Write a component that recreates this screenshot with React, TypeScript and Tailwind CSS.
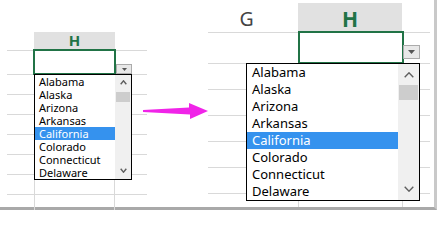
import React from "react";

const states = [
  "Alabama",
  "Alaska",
  "Arizona",
  "Arkansas",
  "California",
  "Colorado",
  "Connecticut",
  "Delaware",
];

function Chev({ up, w, h }: { up: boolean; w: number; h: number }) {
  const d = up
    ? `M0.7 ${h - 0.8} L${w / 2} 0.8 L${w - 0.7} ${h - 0.8}`
    : `M0.7 0.8 L${w / 2} ${h - 0.8} L${w - 0.7} 0.8`;
  return (
    <svg width={w} height={h} viewBox={`0 0 ${w} ${h}`}>
      <path d={d} stroke="#5f5f5f" strokeWidth={1.4} fill="none" />
    </svg>
  );
}

function Tri({ w, h }: { w: number; h: number }) {
  return (
    <svg width={w} height={h} viewBox={`0 0 ${w} ${h}`}>
      <path d={`M0 0 L${w} 0 L${w / 2} ${h} Z`} fill="#555555" />
    </svg>
  );
}

function LeftRow({ last }: { last?: boolean }) {
  return (
    <div
      className={
        last
          ? "flex h-[16px] border-t border-[#d9d9d9]"
          : "flex h-[20px] border-t border-[#d9d9d9]"
      }
    >
      <div className="w-[27px]" />
      <div className="w-[80px] border-l border-[#d9d9d9]" />
      <div className="flex-1 border-l border-[#d9d9d9]" />
    </div>
  );
}

function RightRow({ last }: { last?: boolean }) {
  return (
    <div
      className={
        last
          ? "flex h-[14px] border-t border-[#d9d9d9]"
          : "flex h-[26px] border-t border-[#d9d9d9]"
      }
    >
      <div className="w-[90px]" />
      <div className="w-[104px] border-l border-[#d9d9d9]" />
      <div className="flex-1 border-l border-[#d9d9d9]" />
    </div>
  );
}

export default function App() {
  return (
    <div className="w-[437px] h-[210px] bg-white overflow-hidden font-['Noto_Sans',sans-serif]">
      <div className="relative flex w-[437px] h-[210px] bg-white border-r-[3px] border-b-[3px] border-r-[#c9c9c9] border-b-[#a9a9a9]">
        {/* LEFT small view */}
        <div className="relative ml-[7px] w-[140px] h-full pt-[32px]">
          <div className="flex h-[18px]">
            <div className="w-[27px]" />
            <div className="w-[81px] h-[17px] bg-[#e1e1e1] text-center text-[15px] font-bold leading-[17px] text-[#217346]">
              H
            </div>
          </div>
          <div className="flex h-[24px] border-t border-[#d9d9d9]">
            <div className="w-[27px]" />
            <div className="w-[80px] border-l border-[#d9d9d9]" />
            <div className="flex-1 border-l border-[#d9d9d9]" />
          </div>
          <LeftRow />
          <LeftRow />
          <LeftRow />
          <LeftRow />
          <LeftRow />
          <LeftRow />
          <LeftRow last />

          <div className="absolute left-[26px] top-[49px] w-[83px] h-[26px] border-2 border-[#217346]" />
          <div className="absolute left-[109px] top-[64px] w-[16px] h-[10px] border border-[#ababab] bg-[#e8e8e8] flex items-center justify-center">
            <Tri w={5} h={3} />
          </div>
          <div className="absolute left-[27px] top-[74px] w-[98px] h-[106px] border border-black bg-white flex">
            <div className="w-[80px] flex flex-col">
              {states.map((s, i) => (
                <div
                  key={s}
                  className={
                    i === 4
                      ? "h-[13px] pl-[4px] text-[11px] leading-[13px] bg-[#3592ee] text-white whitespace-nowrap"
                      : "h-[13px] pl-[4px] text-[11px] leading-[13px] text-black whitespace-nowrap"
                  }
                >
                  {s}
                </div>
              ))}
            </div>
            <div className="w-[16px] bg-[#f0f0f0] flex flex-col">
              <div className="h-[13px] flex items-center justify-center pt-[1px]">
                <Chev up w={7} h={5} />
              </div>
              <div className="mt-[4px] mx-[1px] h-[10px] bg-[#cdcdcd]" />
              <div className="flex-1" />
              <div className="h-[13px] flex items-center justify-center pb-[4px]">
                <Chev up={false} w={7} h={5} />
              </div>
            </div>
          </div>
        </div>

        {/* RIGHT zoomed view */}
        <div className="relative ml-[61px] w-[222px] h-full">
          <div className="flex h-[32px]">
            <div className="w-[77px] pt-[9px] text-center text-[19.5px] leading-[20px] text-[#444444]">
              G
            </div>
            <div className="w-[13px]" />
            <div className="w-[104px] h-[28px] mt-[3px] pt-[6px] bg-[#e1e1e1] text-center text-[21px] font-bold leading-[20px] text-[#217346]">
              H
            </div>
          </div>
          <div className="flex h-[31px] border-t border-[#d9d9d9]">
            <div className="w-[90px]" />
            <div className="w-[104px] border-l border-[#d9d9d9]" />
            <div className="flex-1 border-l border-[#d9d9d9]" />
          </div>
          <RightRow />
          <RightRow />
          <RightRow />
          <RightRow />
          <RightRow />
          <RightRow last />

          <div className="absolute left-[90px] top-[31px] w-[106px] h-[33px] border-2 border-[#217346]" />
          <div className="absolute left-[195px] top-[45px] w-[17px] h-[14px] border border-[#ababab] bg-[#e8e8e8] flex items-center justify-center">
            <Tri w={7} h={4} />
          </div>
          <div className="absolute left-[38px] top-[63px] w-[174px] h-[138px] border border-black bg-white flex">
            <div className="w-[151px] flex flex-col">
              {states.map((s, i) => (
                <div
                  key={s}
                  className={
                    i === 4
                      ? "h-[17px] pl-[5px] text-[13px] leading-[17px] bg-[#3592ee] text-white whitespace-nowrap"
                      : "h-[17px] pl-[5px] text-[13px] leading-[17px] text-black whitespace-nowrap"
                  }
                >
                  {s}
                </div>
              ))}
            </div>
            <div className="w-[21px] bg-[#f0f0f0] flex flex-col">
              <div className="h-[17px] flex items-center justify-center pt-[4px]">
                <Chev up w={10} h={6} />
              </div>
              <div className="mt-[4px] mx-[1px] h-[15px] bg-[#cdcdcd]" />
              <div className="flex-1" />
              <div className="h-[17px] flex items-center justify-center pb-[6px]">
                <Chev up={false} w={10} h={6} />
              </div>
            </div>
          </div>
        </div>

        {/* magenta arrow */}
        <svg
          className="absolute left-[143px] top-[103px]"
          width={66}
          height={17}
          viewBox="0 0 66 17"
        >
          <polygon
            points="0,7 46,4.5 46,0 65,8 47,16 47,11.5 0,9"
            fill="#f024e8"
          />
        </svg>
      </div>
    </div>
  );
}
